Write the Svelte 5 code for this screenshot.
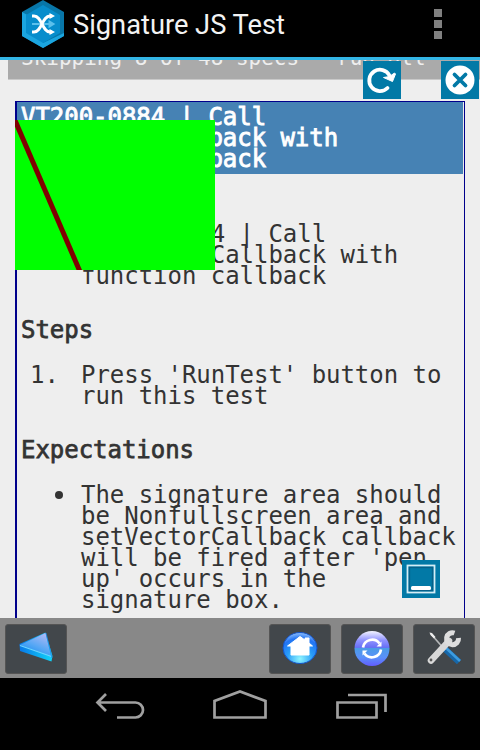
<script>
  const expectations = [
    'The signature area should',
    'be Nonfullscreen area and',
    'setVectorCallback callback',
    "will be fired after 'pen",
    "up' occurs in the",
    'signature box.'
  ];
</script>

<div class="screen">
  <header>
    <svg class="logo" width="42" height="48" viewBox="0 0 42 48">
      <path d="M21 0 42 12V36L21 48 0 36V12Z" fill="#0876a8" />
      <path d="M0 12 21 24V48L0 36ZM42 33 21 43V48L42 36Z" fill="#1ba5df" />
      <path d="M21 5 38 15V33L21 43 4 33V15Z" fill="#078dcc" />
      <path d="M10 24H30M27.500 21.500l4 2.500-4 2.500Z" fill="#5bc0ec" stroke="#5bc0ec" stroke-width="2" />
      <path d="M10 16h2c8 0 8 16 16 16h2M10 32h2c8 0 8-16 16-16h2" fill="none" stroke="#fff" stroke-width="2.800" />
      <path d="M27.500 13 33 16 27.500 19ZM27.500 29 33 32 27.500 35Z" fill="#fff" />
    </svg>
    <h1>Signature JS Test</h1>
    <div class="overflow"><i></i><i></i><i></i></div>
  </header>

  <main>
    <div class="status"><span>Skipping 8 of 48 specs   run all</span></div>
    <section class="panel">
      <h2>VT200-0884 | Call<br />setVectorCallback with<br />function callback</h2>
      <ul class="goal"><li>VT200-0884 | Call<br />setVectorCallback with<br />function callback</li></ul>
      <h3>Steps</h3>
      <div class="step"><span>1.</span><p>Press 'RunTest' button to<br />run this test</p></div>
      <h3>Expectations</h3>
      <div class="expect">
        <b class="dot"></b>
        <p>{#each expectations as line}{line}<br />{/each}</p>
      </div>
    </section>

    <svg class="signature" width="200" height="150" viewBox="0 0 200 150">
      <rect width="200" height="150" fill="#0f0" />
      <path d="M-1-2 66 154" stroke="#800000" stroke-width="5" />
    </svg>
    <svg class="tool reload" width="38" height="38" viewBox="0 0 38 38">
      <rect width="38" height="38" fill="#0279a6" />
      <path d="M24.500 27A10.700 10.700 0 1 1 26.500 14.500" fill="none" stroke="#fff" stroke-width="3.8" stroke-linecap="round" />
      <path d="M20.500 16.500 26.500 15.500 31.500 12 32.500 13 29.500 20.500Z" fill="#fff" stroke="#fff" stroke-linejoin="round" />
    </svg>
    <svg class="tool close" width="38" height="38" viewBox="0 0 38 38">
      <rect width="38" height="38" fill="#0279a6" />
      <circle cx="19" cy="19" r="14.5" fill="#fff" />
      <path d="M13.5 13.5l11 11m0-11-11 11" stroke="#0279a6" stroke-width="3.8" stroke-linecap="round" />
    </svg>
    <svg class="tool minimize" width="38" height="38" viewBox="0 0 38 38">
      <rect width="38" height="38" fill="#0279a6" />
      <rect x="5.5" y="5.5" width="27" height="27" fill="#0279a6" stroke="#d5edf6" stroke-width="1.8" />
      <rect x="7.5" y="7.5" width="23" height="23" fill="none" stroke="#076089" stroke-width="1.3" />
      <rect x="9" y="26" width="20" height="4" rx="1.5" fill="#fff" />
    </svg>
  </main>

  <nav class="toolbar">
    <div class="key back">
      <svg width="60" height="48" viewBox="0 0 60 48">
        <defs>
          <linearGradient id="face" x1=".8" y1="0" x2=".2" y2="1"><stop offset="0" stop-color="#b3b9f5" /><stop offset=".55" stop-color="#55a7f5" /><stop offset="1" stop-color="#1389f0" /></linearGradient>
          <linearGradient id="edge"><stop stop-color="#0878e8" /><stop offset="1" stop-color="#12d6f8" /></linearGradient>
        </defs>
        <path d="M13.500 19 39.500 7.5 46.500 31 45.500 36.500 14 26Z" fill="url(#edge)" />
        <path d="M14 20 39.500 8 45 31Z" fill="url(#face)" />
        <path d="M14 20.500 45.500 31.500" stroke="#6fd3ff" stroke-width="1.3" />
        <path d="M40 8 46 33" stroke="#2587e9" stroke-width=".8" />
      </svg>
    </div>
    <div class="key">
      <svg width="60" height="48" viewBox="0 0 60 48">
        <defs><radialGradient id="orb" cx=".5" cy=".85" r=".85"><stop offset="0" stop-color="#8ff6ff" /><stop offset=".45" stop-color="#289cf8" /><stop offset=".78" stop-color="#2274f4" /><stop offset="1" stop-color="#91c0fa" /></radialGradient></defs>
        <ellipse cx="30" cy="23" rx="17" ry="15.500" fill="url(#orb)" stroke="#1454c8" />
        <path d="M30 11.500 35 15V13h4v5l3.500 3H39v9H21v-9h-3.500Z" fill="#fff" stroke="#fff" stroke-linejoin="round" />
      </svg>
    </div>
    <div class="key">
      <svg width="60" height="48" viewBox="0 0 60 48">
        <defs><linearGradient id="sync" x2="0" y2="1"><stop stop-color="#f4f4ff" /><stop offset=".27" stop-color="#8e91ff" /><stop offset=".47" stop-color="#6770f5" /><stop offset=".5" stop-color="#4b9be6" /><stop offset=".75" stop-color="#5a91fa" /><stop offset="1" stop-color="#625cff" /></linearGradient></defs>
        <circle cx="30" cy="23.500" r="17.500" fill="url(#sync)" />
        <path d="M21 22.500A9.200 9.200 0 0 1 37.500 18.500M39 24.500A9.200 9.200 0 0 1 22.500 28.500" fill="none" stroke="#fff" stroke-width="2.700" />
        <path d="M39.500 16.500V21.500H34.500ZM20.500 30.500V25.500H25.500Z" fill="#fff" />
      </svg>
    </div>
    <div class="key">
      <svg width="60" height="48" viewBox="0 0 60 48">
        <path d="M31 24 45 37" stroke="#1767a8" stroke-width="6" />
        <path d="M32 23 46 36" stroke="#3c9ce0" stroke-width="2.500" />
        <path d="M17 9 31 25" stroke="#b5b7b8" stroke-width="1.700" />
        <path d="M15.500 7.500 18 8 21.500 12 20 13.500 16.500 10Z" fill="#eee" />
        <path d="M17 35.500 35 16" stroke="#d8d8d8" stroke-width="6.500" stroke-linecap="round" />
        <path d="M40.500 8A6 6 0 1 0 44.500 13" fill="none" stroke="#dedede" stroke-width="5" />
        <circle cx="17" cy="35" r="1.400" fill="#555" />
      </svg>
    </div>
  </nav>

  <footer>
    <svg width="480" height="72" viewBox="0 0 480 72" fill="none" stroke="#a0a0a0" stroke-width="2.700">
      <path d="M106 16 97.500 24.500 106 33M98 24.500H135.500A7.500 7.500 0 0 1 135.500 39.500H117" />
      <path d="M214.500 39.500V23L240 13.500 265.500 23V39.500Z" />
      <path d="M337.500 24.500H376.500V39.500H337.500ZM348 17H385.500V34" />
    </svg>
  </footer>
</div>

<style>
  :global(body) { margin: 0; background: #000; }
  .screen { width: 480px; height: 750px; overflow: hidden; display: flex; flex-direction: column; background: #000; }
  h1, h2, h3, p, ul { margin: 0; padding: 0; font-weight: normal; }
  header { box-sizing: border-box; height: 60px; flex: none; display: flex; align-items: flex-start; padding-left: 22px; border-bottom: 3px solid #33b5e5; }
  h1 { flex: 1; margin: 9px 0 0 9px; font: 27.25px/32px Roboto, sans-serif; color: #f3f3f3; white-space: nowrap; }
  .overflow { display: flex; flex-direction: column; gap: 3px; margin: 9px 38px 0 0; }
  .overflow i { width: 8px; height: 8px; background: #808080; }
  main { position: relative; height: 558px; flex: none; overflow: hidden; background: #eee; color: #333; font: 24px/21px "DejaVu Sans Mono", monospace; letter-spacing: -0.035px; white-space: nowrap; }
  .status { box-sizing: border-box; height: 20px; margin-left: 8px; padding-left: 13px; overflow: hidden; background: #aaa; border-bottom: 1px solid #c9c9c9; color: #eee; font-size: 21px; line-height: 20px; letter-spacing: 0; white-space: pre; }
  .status span { display: block; margin-top: -12px; }
  .panel { box-sizing: border-box; width: 450px; height: 530px; margin: 21px 0 0 15px; border: solid #00008b; border-width: 1px 1px 0 2px; }
  h2 { box-sizing: border-box; height: 72px; padding: 5px 0 0 4px; margin-right: 1px; background: #4682b4; color: #fff; font: 24px/21px "DejaVu Sans Mono", monospace; -webkit-text-stroke: .85px #fff; }
  .goal { margin-top: 50px; padding-left: 64px; list-style: none; }
  h3 { margin: 33px 0 24px 4px; font: 24px/21px "DejaVu Sans Mono", monospace; -webkit-text-stroke: .75px #333; }
  .step { display: flex; padding-left: 13px; }
  .step span { width: 51px; }
  .expect { display: flex; padding-left: 38px; }
  .dot { width: 8px; height: 8px; margin: 6px 18px 0 0; border-radius: 50%; background: #333; }
  .signature, .tool { position: absolute; }
  .signature { left: 15px; top: 60px; }
  .reload { left: 363px; top: 1px; }
  .close { left: 441px; top: 1px; }
  .minimize { left: 402px; top: 500px; }
  .toolbar { box-sizing: border-box; height: 60px; flex: none; display: flex; gap: 10px; padding: 6px 5px 0; background: #888; }
  .key { box-sizing: border-box; width: 62px; height: 50px; border: 1px solid #555; border-radius: 3px; background: #42474b; }
  .back { margin-right: auto; }
  svg { display: block; }
  footer { height: 72px; background: #000; }
</style>
